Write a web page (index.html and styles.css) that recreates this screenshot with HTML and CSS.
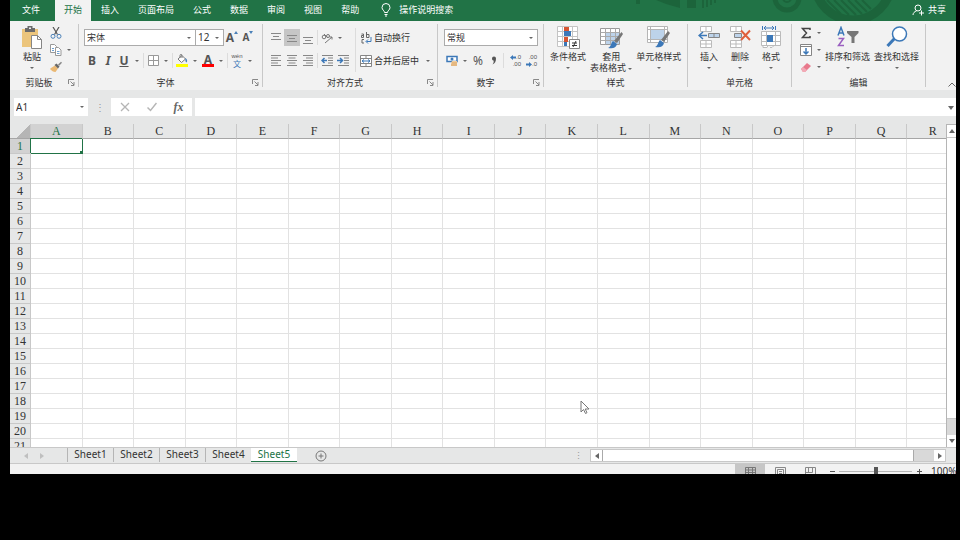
FILE: index.html
```html
<!DOCTYPE html>
<html lang="zh-CN">
<head>
  <meta charset="UTF-8" />
  <meta name="viewport" content="width=device-width, initial-scale=1.0" />
  <title>Excel</title>
  <link rel="stylesheet" href="styles.css">
</head>
<body>
  <main class="window">
    <header class="titlebar">
      <svg class="pattern" width="300" height="21" viewBox="630 0 300 21" fill="none" stroke="#1c643b">
        <path d="M636 0h4v4h-4zM687 0h9v8h-9z" fill="#1c643b" stroke="none"/>
        <path d="M656 0l10 4 14 4V0z" fill="#1c643b" stroke="none"/>
        <path d="M703 0v8M707 0v7M711 0v5M715 0v3" stroke-width="2"/>
        <circle cx="787" cy="-2" r="12" stroke-width="5"/>
        <circle cx="787" cy="-2" r="4" stroke-width="2"/>
        <circle cx="853" cy="-18" r="38" stroke-width="9"/>
        <path d="M827 0l14 14M834 0l15 15M841 0l15 15M848 0l14 14M855 0l12 12M862 0l9 9" stroke-width="2"/>
      </svg>
      <nav class="tabs">
        <button class="tab file">文件</button>
        <button class="tab active">开始</button>
        <button class="tab">插入</button>
        <button class="tab">页面布局</button>
        <button class="tab">公式</button>
        <button class="tab">数据</button>
        <button class="tab">审阅</button>
        <button class="tab">视图</button>
        <button class="tab">帮助</button>
      </nav>
      <button class="tell-me">
        <svg width="10" height="14" viewBox="0 0 10 14" fill="none" stroke="#fff"><path d="M3.500 9.500C3.500 7.500 1 7 1 4.500a4 4 0 0 1 8 0C9 7 6.500 7.500 6.500 9.500zM3.500 11.500h3M4 13h2"/></svg>
        操作说明搜索
      </button>
      <button class="share">
        <svg width="12" height="12" viewBox="0 0 12 12" fill="none" stroke="#fff"><circle cx="6" cy="4" r="3"/><path d="M1 11c0-2 1.500-3.500 3.500-4M7 9h5M9.500 6.500v5"/></svg>
        共享
      </button>
    </header>

    <section class="ribbon">
      <div class="group clipboard">
        <div class="tools">
          <button class="big">
            <svg width="22" height="23" viewBox="0 0 22 23"><path d="M1 3h16v18H1z" fill="#ecc57c"/><path d="M4 2h2.500V0h5v2H14v4H4z" fill="#6b6b6b"/><path d="M8 1.500h2v1.500H8z" fill="#f1f1f1"/><path d="M10.500 9.500h6l4 4v9h-10z" fill="#fff" stroke="#868686"/><path d="M16.500 9.500v4h4" fill="none" stroke="#868686"/></svg>
            <span>粘贴</span>
            <i class="arrow"></i>
          </button>
          <div class="stack">
            <button class="small" aria-label="剪切"><svg width="12" height="12" viewBox="0 0 12 12" fill="none"><path d="M3 0l4.500 7.500M9 0L4.500 7.500" stroke="#555" stroke-width="1.200"/><circle cx="3" cy="9.300" r="2" stroke="#4a80b8"/><circle cx="9" cy="9.300" r="2" stroke="#4a80b8"/></svg></button>
            <button class="small" aria-label="复制"><svg width="12" height="12" viewBox="0 0 12 12" fill="#fff" stroke="#999"><path d="M.5.5h4l2 2v6h-6z"/><path d="M5.500 3.500h3l2.500 2.500v5.500H5.500z"/><path d="M7 7.500h2.500M7 9.500h2.500M2 4.500h2M2 6.500h2" stroke="#6d9fd0"/></svg><i class="arrow"></i></button>
            <button class="small" aria-label="格式刷"><svg width="12" height="12" viewBox="0 0 12 12"><path d="M1 7l4-2.500 3 3L5.500 11C3 11 2 10 0 8z" fill="#eab873"/><path d="M4.500 4L6.500 2.500l3 3L8 7.500z" fill="#666"/><path d="M8 3.500L11 .8l1 1L9.200 4.800z" fill="#888"/></svg></button>
          </div>
        </div>
        <footer><span>剪贴板</span><svg class="launcher" viewBox="0 0 7 7"><path d="M.5 5V.5H6M2.500 2.500L6 6M6 3v3.500H3"/></svg></footer>
      </div>

      <div class="group font">
        <div class="tools rows">
          <div class="row">
            <span class="drop name"><select aria-label="字体"><option>宋体</option></select></span>
            <span class="drop size"><select aria-label="字号"><option>12</option></select></span>
            <button class="icon grow" aria-label="增大字号">A<svg width="4" height="3" viewBox="0 0 4 3"><path d="M0 3l2-3 2 3z" fill="#4a80b8"/></svg></button>
            <button class="icon shrink" aria-label="减小字号">A<svg width="4" height="3" viewBox="0 0 4 3"><path d="M0 0h4L2 3z" fill="#4a80b8"/></svg></button>
          </div>
          <div class="row">
            <button class="icon letter">B</button>
            <button class="icon letter"><em>I</em></button>
            <button class="icon letter"><u>U</u></button>
            <button class="caret" aria-label="下划线"><i class="arrow"></i></button>
            <span class="sep"></span>
            <button class="icon" aria-label="边框"><svg width="11" height="11" viewBox="0 0 11 11" fill="#fff" stroke="#999"><path d="M.5.5h10v10H.5zM5.500.5v10M.5 5.500h10"/></svg></button>
            <button class="caret" aria-label="边框样式"><i class="arrow"></i></button>
            <span class="sep"></span>
            <button class="icon" aria-label="填充颜色"><svg width="12" height="13" viewBox="0 0 12 13"><path d="M2 5l4-3.500L9.500 5 5.500 8.500z" fill="#fff" stroke="#777"/><path d="M4 4V1.500C4 0 6 0 6 1.500V4" fill="none" stroke="#777"/><path d="M9.500 4c2 1.500 2 3 1 4.500-1-.5-1.500-2-1-4.500z" fill="#4a80b8"/><path d="M0 10h12v3H0z" fill="#ff0"/></svg></button>
            <button class="caret" aria-label="选择填充颜色"><i class="arrow"></i></button>
            <button class="icon color" aria-label="字体颜色">A</button>
            <button class="caret" aria-label="选择字体颜色"><i class="arrow"></i></button>
            <span class="sep"></span>
            <button class="icon pinyin" aria-label="拼音"><small>wén</small><span>文</span></button>
            <button class="caret" aria-label="拼音选项"><i class="arrow"></i></button>
          </div>
        </div>
        <footer><span>字体</span><svg class="launcher" viewBox="0 0 7 7"><path d="M.5 5V.5H6M2.500 2.500L6 6M6 3v3.500H3"/></svg></footer>
      </div>

      <div class="group align">
        <div class="tools">
          <div class="rows">
            <div class="row">
              <button class="icon" aria-label="顶端对齐"><svg class="lines" viewBox="0 0 10 12"><path d="M0 1.500h10M2 4.500h6M0 7.500h10"/></svg></button>
              <button class="icon pressed" aria-label="垂直居中"><svg class="lines" viewBox="0 0 10 12"><path d="M0 3.500h10M2 6.500h6M0 9.500h10"/></svg></button>
              <button class="icon" aria-label="底端对齐"><svg class="lines" viewBox="0 0 10 12"><path d="M0 5.500h10M2 8.500h6M0 11.500h10"/></svg></button>
              <span class="sep"></span>
              <button class="icon" aria-label="方向"><svg width="12" height="12" viewBox="0 0 12 12" fill="none" stroke="#777"><circle cx="3" cy="5" r="1.800"/><path d="M3 2l4 4"/><circle cx="7" cy="4" r="1.500"/><path d="M4 11l7-6M8.500 5H11v2.500"/></svg></button>
              <button class="caret" aria-label="方向选项"><i class="arrow"></i></button>
            </div>
            <div class="row">
              <button class="icon" aria-label="左对齐"><svg class="lines" viewBox="0 0 10 12"><path d="M0 .5h10M0 3h7M0 5.500h10M0 8h7M0 10.500h10"/></svg></button>
              <button class="icon" aria-label="居中"><svg class="lines" viewBox="0 0 10 12"><path d="M0 .5h10M1.500 3h7M0 5.500h10M1.500 8h7M0 10.500h10"/></svg></button>
              <button class="icon" aria-label="右对齐"><svg class="lines" viewBox="0 0 10 12"><path d="M0 .5h10M3 3h7M0 5.500h10M3 8h7M0 10.500h10"/></svg></button>
              <span class="sep"></span>
              <button class="icon" aria-label="减少缩进"><svg width="12" height="12" viewBox="0 0 12 12" fill="none" stroke="#858585"><path d="M1 .5h11M7 3h5M7 5.500h5M7 8h5M1 10.500h11"/><path d="M6 5.500H1M3.500 3L1 5.500 3.500 8" stroke="#3c78b8" stroke-width="1.500"/></svg></button>
              <button class="icon" aria-label="增加缩进"><svg width="12" height="12" viewBox="0 0 12 12" fill="none" stroke="#858585"><path d="M1 .5h11M7 3h5M7 5.500h5M7 8h5M1 10.500h11"/><path d="M0 5.500h5M3 3l2.500 2.500L3 8" stroke="#3c78b8" stroke-width="1.500"/></svg></button>
            </div>
          </div>
          <span class="sep tall"></span>
          <div class="rows">
            <button class="wide"><svg width="12" height="12" viewBox="0 0 12 12" fill="none" stroke="#666"><path d="M1.500 2h2v3.500M3.500 3.500h-2v2h2M6.500 0v5.500h2.500v-3H6.500M4 7.500H2v3.500h2"/><path d="M11 5v4.500H6.500M8 7.500L6 9.500 8 11.500" stroke="#3c78b8"/></svg>自动换行</button>
            <button class="wide"><svg width="12" height="12" viewBox="0 0 12 12" fill="#fff" stroke="#858585"><path d="M.5.500h11v11H.5zM.5 3.500h11M.5 8.500h11M6 .5v3M6 8.500v3"/><path d="M2 6h8M4 4.500L2 6l2 1.500M8 4.500L10 6 8 7.500" stroke="#3c78b8" fill="none"/></svg>合并后居中 <i class="arrow"></i></button>
          </div>
        </div>
        <footer><span>对齐方式</span><svg class="launcher" viewBox="0 0 7 7"><path d="M.5 5V.5H6M2.500 2.500L6 6M6 3v3.500H3"/></svg></footer>
      </div>

      <div class="group number">
        <div class="tools rows">
          <div class="row"><span class="drop format"><select aria-label="数字格式"><option>常规</option></select></span></div>
          <div class="row">
            <button class="icon" aria-label="会计数字格式"><svg width="13" height="12" viewBox="0 0 13 12"><path d="M1 1.500h10v5H1z" fill="#fff" stroke="#3c78b8" stroke-width="1.500"/><circle cx="6" cy="4" r="1.500" fill="#3c78b8"/><path d="M6 6h5v5H5V8z" fill="#f0cb9c"/><path d="M6 8h5M5 10h6" stroke="#d9a566"/></svg></button>
            <button class="caret" aria-label="货币"><i class="arrow"></i></button>
            <button class="icon percent">%</button>
            <button class="icon comma" aria-label="千位分隔样式"><svg width="6" height="9" viewBox="0 0 6 9"><path d="M1 2.500a2 2 0 0 1 4 0C5 5.500 4 7.500 1.500 8.500 2.500 7 3 6 2.500 4.500 1.500 4.500 1 3.500 1 2.500z" fill="#555"/></svg></button>
            <span class="sep"></span>
            <button class="icon digits" aria-label="增加小数位数"><span><svg width="6" height="5" viewBox="0 0 6 5"><path d="M0 2.500L3 0v1.500h3v2H3V5z" fill="#3c78b8"/></svg>.0</span><span>.00</span></button>
            <button class="icon digits" aria-label="减少小数位数"><span>.00</span><span><svg width="6" height="5" viewBox="0 0 6 5"><path d="M6 2.500L3 0v1.500H0v2h3V5z" fill="#3c78b8"/></svg>.0</span></button>
          </div>
        </div>
        <footer><span>数字</span><svg class="launcher" viewBox="0 0 7 7"><path d="M.5 5V.5H6M2.500 2.500L6 6M6 3v3.500H3"/></svg></footer>
      </div>

      <div class="group styles">
        <div class="tools">
          <button class="big">
            <svg width="23" height="23" viewBox="0 0 23 23"><path d="M.5.5h20v20H.5zM5.500.5v20M15.500.5v20M.5 5.500h20M.5 10.500h20M.5 15.500h20" fill="#fff" stroke="#c4c4c4"/><path d="M7 1h5v4H7zM7 11h4v5H7z" fill="#d65532"/><path d="M7 5h7v5H7zM7 16h3v4H7z" fill="#3c78b8"/><path d="M12.500 13.500h10v9h-10z" fill="#fff" stroke="#858585"/><path d="M15 17h5M15 19.500h5M19 15l-3 6" stroke="#333"/></svg>
            <span>条件格式</span>
            <i class="arrow"></i>
          </button>
          <button class="big">
            <svg width="23" height="23" viewBox="0 0 23 23"><path d="M.5 2.500h19v16H.5z" fill="#fff" stroke="#9a9a9a"/><path d="M6 7h13v11H6z" fill="#bdd3ea"/><path d="M.5 6.500h19M.5 10.500h19M.5 14.500h19M5.500 2.500v16M10.500 2.500v16M15.500 2.500v16" stroke="#aaa" fill="none"/><path d="M21.500 6l1.500 2-6 9-3-2z" fill="#777"/><path d="M13 15l4 3c-1 4-4 5-9 4 3-1 3-5 5-7z" fill="#3c78b8"/></svg>
            <span>套用<br>表格格式 <i class="arrow"></i></span>
          </button>
          <button class="big">
            <svg width="23" height="23" viewBox="0 0 23 23"><path d="M.5.5h20v16H.5z" fill="#fff" stroke="#b5b5b5"/><path d="M4 4h13v10H4z" fill="#bdd3ea"/><path d="M.5 3.500h20M3.500.5v16M.5 13.500h20M17.500.5v16" stroke="#b5b5b5" fill="none"/><path d="M21 5l2 2-6 9-3-2z" fill="#777"/><path d="M13 14l4 3c-1 4-4 5-9 4 3-1 3-5 5-7z" fill="#3c78b8"/></svg>
            <span>单元格样式</span>
            <i class="arrow"></i>
          </button>
        </div>
        <footer><span>样式</span></footer>
      </div>

      <div class="group cells">
        <div class="tools">
          <button class="big">
            <svg width="22" height="23" viewBox="0 0 22 23" fill="#fff" stroke="#bbb"><path d="M2.500.5h11v5h-11zM8 .5v5M2.500 14.500h11v7h-11zM8 14.500v7M2.500 18h11"/><path d="M10.500 7.500h11v4h-11zM16 7.500v4" fill="#bdd3ea" stroke="#858585"/><path d="M9 9.500H1M5 6L1 9.500 5 13" fill="none" stroke="#3c78b8" stroke-width="1.500"/></svg>
            <span>插入</span>
            <i class="arrow"></i>
          </button>
          <button class="big">
            <svg width="22" height="23" viewBox="0 0 22 23" fill="#fff" stroke="#bbb"><path d="M1.500.5h11v5h-11zM7 .5v5M1.500 14.500h11v7h-11zM7 14.500v7M1.500 18h11"/><path d="M5.500 7.500h7v4h-7z" fill="#bdd3ea" stroke="#858585"/><path d="M12 4.500l9 9.500M21 4.500L12 14" fill="none" stroke="#e0603c" stroke-width="2"/></svg>
            <span>删除</span>
            <i class="arrow"></i>
          </button>
          <button class="big">
            <svg width="22" height="23" viewBox="0 0 22 23" fill="#fff" stroke="#bbb"><path d="M1.500 5.500h19v14h-19zM6.500 5.500v14M15.500 5.500v14M1.500 9.500h19M1.500 15.500h19M3 19.500v2h4l1-2M14 19.500l-2 2h-2"/><path d="M7 9h6v7H7z" fill="#3c78b8" stroke="none"/><path d="M2.500 0v4M15.500 0v4M4 2h10M6 0L4 2l2 2M12 0l2 2-2 2" fill="none" stroke="#3c78b8"/></svg>
            <span>格式</span>
            <i class="arrow"></i>
          </button>
        </div>
        <footer><span>单元格</span></footer>
      </div>

      <div class="group editing">
        <div class="tools">
          <div class="stack">
            <button class="small" aria-label="自动求和"><svg width="12" height="12" viewBox="0 0 12 12" fill="none" stroke="#444" stroke-width="1.500"><path d="M10 3V1.500H2.500L6.500 6l-4 4.500H10V9"/></svg><i class="arrow"></i></button>
            <button class="small" aria-label="填充"><svg width="12" height="12" viewBox="0 0 12 12" fill="#fff" stroke="#858585"><path d="M.5.5h11v11H.5zM.5 2.500h11"/><path d="M6 4v6M3.500 7.500L6 10l2.500-2.500" fill="none" stroke="#3c78b8" stroke-width="1.500"/></svg><i class="arrow"></i></button>
            <button class="small" aria-label="清除"><svg width="12" height="12" viewBox="0 0 12 12"><path d="M1 8l6-6 4 3-6 6H3z" fill="#e8798c"/><path d="M3 6l4 3-2 2H3L1 8z" fill="#f2a9b5"/></svg><i class="arrow"></i></button>
          </div>
          <button class="big">
            <svg width="22" height="23" viewBox="0 0 22 23" fill="none" stroke-width="1.500"><path d="M1 9.500l3-8 3 8M2 7h4" stroke="#3c78b8"/><path d="M1.500 12.500h5l-5 7h5.500" stroke="#9a5fc0"/><path d="M10 5h11.500v2L17.500 11v6h-3v-6L10 7z" fill="#777"/></svg>
            <span>排序和筛选</span>
            <i class="arrow"></i>
          </button>
          <button class="big">
            <svg width="22" height="23" viewBox="0 0 22 23" fill="#fff" stroke="#3c78b8"><path d="M9 12l-7.500 8" stroke-width="3"/><circle cx="13.500" cy="8" r="7" stroke-width="1.500"/></svg>
            <span>查找和选择</span>
            <i class="arrow"></i>
          </button>
        </div>
        <footer><span>编辑</span></footer>
      </div>

      <button class="collapse" aria-label="折叠功能区"><svg width="8" height="5" viewBox="0 0 8 5" fill="none" stroke="#666"><path d="M.5 4.500L4 1l3.500 3.500"/></svg></button>
    </section>

    <section class="formula-bar">
      <span class="drop cell-name"><input type="text" value="A1" aria-label="名称框"></span>
      <span class="dots">⋮</span>
      <div class="formula-tools">
        <button aria-label="取消"><svg width="10" height="10" viewBox="0 0 10 10" fill="none" stroke="#b5b5b5" stroke-width="1.300"><path d="M1 1l8 8M9 1L1 9"/></svg></button>
        <button aria-label="输入"><svg width="10" height="10" viewBox="0 0 10 10" fill="none" stroke="#b5b5b5" stroke-width="1.500"><path d="M.5 5.500l3 3L9.500 1"/></svg></button>
        <button class="fx"><em>fx</em></button>
      </div>
      <span class="drop formula"><input type="text" aria-label="编辑栏"></span>
    </section>

    <section class="sheet">
      <div class="grid-wrap">
        <table class="grid">
          <thead><tr id="columns"><th class="corner"></th></tr></thead>
          <tbody id="rows"></tbody>
        </table>
      </div>
      <div class="vscroll">
        <button aria-label="向上滚动"><i class="tri up"></i></button>
        <div class="thumb"></div>
        <div class="track"></div>
        <button aria-label="向下滚动"><i class="tri down"></i></button>
      </div>
      <svg class="cursor" width="10" height="15" viewBox="0 0 10 15"><path d="M1 1v11l2.500-2.500 2 4 1.500-.8-1.800-3.700H9z" fill="#fff" stroke="#777"/></svg>
    </section>

    <section class="sheet-bar">
      <div class="sheet-nav">
        <button aria-label="上一个"><i class="tri left"></i></button>
        <button aria-label="下一个"><i class="tri right"></i></button>
      </div>
      <nav class="sheet-tabs">
        <button>Sheet1</button>
        <button>Sheet2</button>
        <button>Sheet3</button>
        <button>Sheet4</button>
        <button class="active">Sheet5</button>
      </nav>
      <button class="add" aria-label="新工作表"><svg width="12" height="12" viewBox="0 0 12 12" fill="none" stroke="#777"><circle cx="6" cy="6" r="5"/><path d="M6 3.500v5M3.500 6h5"/></svg></button>
      <span class="dots">⋮</span>
      <div class="hscroll">
        <button aria-label="向左滚动"><i class="tri left"></i></button>
        <div class="thumb"></div>
        <div class="track"></div>
        <button aria-label="向右滚动"><i class="tri right"></i></button>
      </div>
    </section>

    <footer class="status">
      <button class="view active" aria-label="普通"><svg width="11" height="9" viewBox="0 0 11 9" fill="none" stroke="#777"><path d="M.5.5h10v8H.5zM.5 3h10M.5 5.500h10M3.500.5v8M7.500.5v8"/></svg></button>
      <button class="view" aria-label="页面布局"><svg width="11" height="9" viewBox="0 0 11 9" fill="none" stroke="#888"><path d="M.5.5h10v8H.5zM2.500 2.500h6v6h-6zM4 4.500h3M4 6.500h3"/></svg></button>
      <button class="view" aria-label="分页预览"><svg width="11" height="9" viewBox="0 0 11 9" fill="none" stroke="#888"><path d="M.5 8.500V.5h10v8M3.500.5v5M7.500.5v5M.5 5.500h7"/></svg></button>
      <button class="zoom" aria-label="缩小"><svg width="7" height="7" viewBox="0 0 7 7" stroke="#555"><path d="M1 3.500h5"/></svg></button>
      <input type="range" class="slider" aria-label="缩放">
      <button class="zoom" aria-label="放大"><svg width="7" height="7" viewBox="0 0 7 7" stroke="#555"><path d="M1 3.500h5M3.500 1v5"/></svg></button>
      <span class="percent">100%</span>
    </footer>
  </main>

  <script>
    const columns = document.getElementById('columns');
    const rows = document.getElementById('rows');
    const letters = 'ABCDEFGHIJKLMNOPQR'.split('');

    letters.forEach(letter => {
      const th = document.createElement('th');
      th.textContent = letter;
      if (letter === 'A') th.className = 'current';
      columns.appendChild(th);
    });

    for (let i = 1; i <= 21; i++) {
      const tr = document.createElement('tr');
      const th = document.createElement('th');
      th.textContent = i;
      if (i === 1) th.className = 'current';
      tr.appendChild(th);
      letters.forEach((letter, col) => {
        const td = document.createElement('td');
        if (i === 1 && col === 0) td.className = 'selected';
        tr.appendChild(td);
      });
      rows.appendChild(tr);
    }
  </script>
</body>
</html>
```

FILE: styles.css
```css
:root {
  --green: #217346;
  --ribbon-bg: #f2f2f2;
  --bar-bg: #e6e7e7;
  --line: #c8c8c8;
  --text: #333;
}

* {
  box-sizing: border-box;
}

body {
  margin: 0;
  padding: 0 4px 66px 10px;
  height: 100vh;
  background: #000;
  color: var(--text);
  font-family: "Noto Sans", "Noto Sans CJK SC", sans-serif;
  font-size: 9px;
  line-height: 11px;
}

button {
  display: flex;
  align-items: center;
  justify-content: center;
  margin: 0;
  padding: 0;
  border: none;
  background: none;
  color: inherit;
  font: inherit;
  white-space: nowrap;
}

svg {
  display: block;
  flex: none;
}

input,
select {
  width: 100%;
  height: 100%;
  margin: 0;
  padding: 0 2px;
  border: none;
  border-radius: 0;
  background: #fff;
  color: var(--text);
  font: inherit;
  appearance: none;
}

.window {
  display: flex;
  flex-direction: column;
  height: 100%;
  overflow: hidden;
  background: var(--bar-bg);
}

/* title bar */

.titlebar {
  position: relative;
  display: flex;
  height: 21px;
  background: var(--green);
  color: #fff;
}

.pattern {
  position: absolute;
  top: 0;
  right: 26px;
}

.tabs {
  display: flex;
  gap: 1px;
}

.tab {
  padding: 0 9px 2px;
}

.tab.file {
  padding: 0 14px 2px 12px;
}

.tab.active {
  background: var(--ribbon-bg);
  color: var(--green);
}

.tell-me {
  gap: 8px;
  padding: 0 13px 2px;
}

.share {
  position: relative;
  gap: 4px;
  margin-left: auto;
  padding: 0 10px 2px;
}

/* ribbon */

.ribbon {
  display: flex;
  height: 69px;
  padding: 3px 0;
  background: var(--ribbon-bg);
}

.group {
  display: flex;
  flex-direction: column;
  border-right: 1px solid var(--line);
}

.clipboard { width: 69px; }
.font { width: 184px; }
.align { width: 175px; }
.number { width: 106px; }
.styles { width: 144px; }
.cells { width: 104px; }
.editing { width: 134px; }

.tools {
  display: flex;
  flex: 1;
  min-height: 0;
}

.group footer {
  display: flex;
  flex: none;
  align-items: center;
  height: 12px;
  padding-top: 3px;
  text-align: center;
}

.group footer span {
  flex: 1;
}

.launcher {
  width: 7px;
  height: 7px;
  margin-right: 3px;
  fill: none;
  stroke: #888;
}

.rows {
  display: flex;
  flex-direction: column;
  gap: 6px;
  padding-top: 5px;
}

.row {
  display: flex;
  align-items: center;
  height: 17px;
}

.arrow {
  display: inline-block;
  width: 4px;
  height: 2px;
  border: solid transparent;
  border-width: 2px 2px 0;
  border-top-color: #666;
}

.sep {
  width: 1px;
  height: 15px;
  margin: 0 1px;
  background: #dcdcdc;
}

.sep.tall {
  height: 44px;
  margin: 4px 4px 0;
}

.big {
  flex-direction: column;
  justify-content: flex-start;
  padding-top: 2px;
}

.big > span {
  margin: 2px 0 5px;
}

.big .arrow {
  vertical-align: middle;
}

.stack {
  display: flex;
  flex-direction: column;
}

.small {
  justify-content: flex-start;
  gap: 5px;
  height: 17px;
}

.icon {
  width: 16px;
  height: 17px;
  font-size: 12px;
  color: #555;
}

.letter {
  font-weight: bold;
}

.pressed {
  background: #c6c6c6;
}

.caret {
  width: 10px;
  height: 17px;
}

.lines {
  width: 10px;
  height: 12px;
  fill: none;
  stroke: #888;
}

.wide {
  justify-content: flex-start;
  gap: 2px;
  height: 17px;
}

.wide .arrow {
  margin-left: 5px;
}

.drop {
  position: relative;
  display: block;
  height: 17px;
  border: 1px solid #ababab;
}

.drop::after {
  content: "";
  position: absolute;
  top: 7px;
  right: 4px;
  border: solid transparent;
  border-width: 2px 2px 0;
  border-top-color: #666;
}

.clipboard .tools {
  gap: 7px;
  padding-left: 11px;
}

.font .tools {
  padding-left: 5px;
}

.number .tools {
  padding-left: 6px;
}

.drop.name {
  width: 112px;
}

.drop.size {
  width: 28px;
  border-left: none;
  font-size: 10px;
}

.drop.format {
  width: 94px;
}

.grow,
.shrink {
  align-items: flex-start;
  font-weight: bold;
  line-height: 17px;
}

.grow svg,
.shrink svg {
  margin-top: 2px;
}

.shrink {
  font-size: 10px;
}

.color {
  width: 12px;
  height: 13px;
  margin: 0 2px;
  border-bottom: 3px solid #f00;
  font-weight: bold;
}

.pinyin {
  flex-direction: column;
  font: 8px/9px "Noto Sans CJK SC", sans-serif;
  color: #3c78b8;
}

.pinyin small {
  font: 6px/6px "Liberation Sans", sans-serif;
  color: #555;
}

.align .tools {
  padding-left: 5px;
}

.percent {
  font-size: 12px;
}

.digits {
  flex-direction: column;
  align-items: flex-end;
  font: 6px/7px "Liberation Sans", sans-serif;
}

.digits span {
  display: flex;
  align-items: center;
}

.styles .tools {
  gap: 4px;
  padding-left: 6px;
}

.cells .tools {
  gap: 9px;
  padding-left: 10px;
}

.editing .tools {
  gap: 4px;
  padding-left: 8px;
}

.editing .stack {
  width: 21px;
}

.collapse {
  align-self: flex-end;
  margin-left: auto;
}

/* formula bar */

.formula-bar {
  display: flex;
  align-items: center;
  height: 34px;
  padding-left: 4px;
  font-size: 10px;
}

.formula-bar .drop {
  height: 18px;
  border: none;
}

.cell-name {
  width: 74px;
}

.dots {
  width: 23px;
  color: #999;
  text-align: center;
}

.formula-tools {
  display: flex;
  width: 81px;
  height: 18px;
  margin-right: 3px;
  background: #fff;
}

.formula-tools button {
  flex: 1;
}

.formula-tools .fx {
  font: bold 12px "Liberation Serif", serif;
  color: #666;
}

.formula {
  flex: 1;
}

.formula-bar .drop::after {
  top: 8px;
}

.formula-bar .formula::after {
  right: 2px;
  border-width: 4px 3px 0;
}

/* cells */

.sheet {
  position: relative;
  display: flex;
  flex: 1;
  min-height: 0;
}

.grid-wrap {
  flex: 1;
  overflow: hidden;
}

.grid {
  width: calc(100% + 13px);
  table-layout: fixed;
  border-collapse: separate;
  border-spacing: 0;
  background: #fff;
}

.grid th {
  height: 15px;
  padding: 1px 0 0;
  overflow: hidden;
  border: solid var(--line);
  border-width: 0 1px 1px 0;
  background: var(--bar-bg);
  font: 12px/13px "Liberation Serif", "Noto Sans CJK SC", serif;
}

.grid thead th {
  border-bottom-color: #a6a6a6;
}

.grid .corner {
  width: 21px;
  background: linear-gradient(135deg, var(--bar-bg) 60%, #b5b5b5 60%);
}

.grid .current {
  background: #d2d2d2;
  color: var(--green);
}

.grid td {
  position: relative;
  padding: 0;
  border: solid #e2e2e2;
  border-width: 0 1px 1px 0;
}

.grid .selected {
  border-color: var(--green);
  box-shadow: -1px -1px 0 var(--green);
}

.selected::after {
  content: "";
  position: absolute;
  right: -1px;
  bottom: -1px;
  width: 3px;
  height: 3px;
  background: var(--green);
}

.vscroll {
  display: flex;
  flex-direction: column;
  width: 10px;
  border: solid #b5b5b5;
  border-width: 1px 0 0 1px;
}

.vscroll button {
  height: 12px;
  background: #fff;
}

.vscroll .thumb {
  flex: 1;
  border: solid var(--line);
  border-width: 1px 0;
  background: #fff;
}

.vscroll .track {
  height: 16px;
  background: #d9d9d9;
}

.tri {
  border: 3px solid transparent;
}

.tri.up { border-width: 0 3px 4px; border-bottom-color: #666; }
.tri.down { border-width: 4px 3px 0; border-top-color: #666; }
.tri.left { border-width: 3px 4px 3px 0; border-right-color: #666; }
.tri.right { border-width: 3px 0 3px 4px; border-left-color: #666; }

.cursor {
  position: absolute;
  left: 570px;
  top: 276px;
}

/* sheet tabs */

.sheet-bar {
  display: flex;
  height: 16px;
  padding-right: 10px;
  border-top: 1px solid var(--line);
}

.sheet-nav {
  display: flex;
  width: 57px;
  padding-left: 8px;
  opacity: 0.3;
}

.sheet-nav button {
  width: 16px;
}

.sheet-tabs {
  display: flex;
}

.sheet-tabs button {
  width: 46px;
  height: 14px;
  padding-bottom: 2px;
  border-left: 1px solid #b5b5b5;
  font-size: 10px;
}

.sheet-tabs .active {
  padding-bottom: 0;
  border-left: none;
  border-bottom: 1px solid var(--green);
  background: #fff;
  color: var(--green);
}

.add {
  margin-left: 18px;
}

.sheet-bar .dots {
  margin-left: auto;
  line-height: 15px;
}

.hscroll {
  display: flex;
  width: 38%;
  height: 13px;
  margin-top: 1px;
  border: 1px solid var(--line);
}

.hscroll button {
  width: 11px;
  background: #fff;
}

.hscroll .thumb {
  flex: 1;
  border: solid #aaa;
  border-width: 0 1px;
  background: #fff;
}

.hscroll .track {
  width: 20px;
  background: #d9d9d9;
}

/* status bar */

.status {
  display: flex;
  justify-content: flex-end;
  height: 11px;
  overflow: hidden;
  border-top: 1px solid var(--line);
  background: var(--ribbon-bg);
}

.status button,
.status .percent {
  height: 15px;
}

.status .view {
  width: 30px;
}

.status .view.active {
  background: #c6c6c6;
}

.status .zoom {
  width: 14px;
}

.status .percent {
  width: 30px;
  padding-left: 5px;
  font-size: 10px;
  line-height: 15px;
}

.slider {
  width: 73px;
  height: 15px;
  padding: 0;
  background: linear-gradient(#b5b5b5, #b5b5b5) center / 100% 1px no-repeat;
}

.slider::-webkit-slider-thumb {
  width: 4px;
  height: 9px;
  background: #555;
  appearance: none;
}
```
